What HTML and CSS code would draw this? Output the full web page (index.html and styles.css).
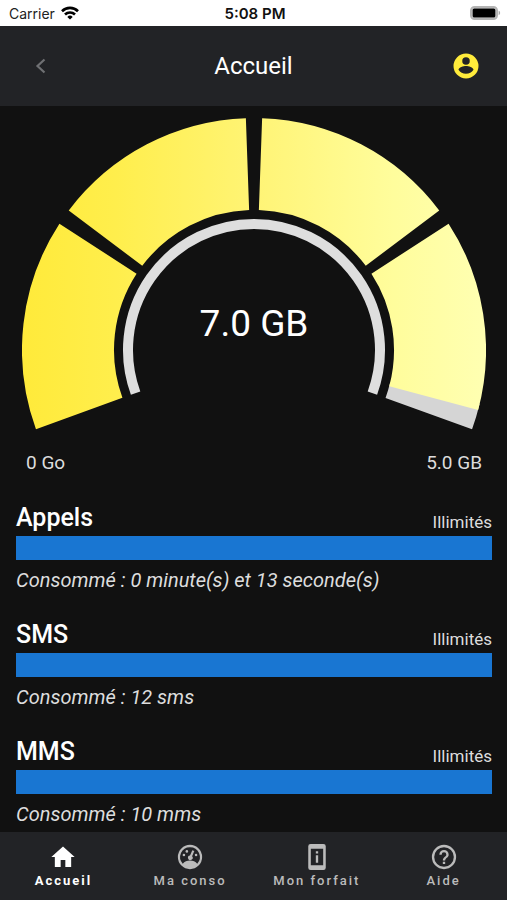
FILE: index.html
```html
<!DOCTYPE html>
<html lang="fr">
<head>
<meta charset="utf-8">
<meta name="viewport" content="width=device-width, initial-scale=1">
<title>Accueil</title>
<link rel="stylesheet" href="styles.css">
</head>
<body>
<div class="status">
  <div class="carrier">
    <span>Carrier</span>
    <svg width="18" height="14" viewBox="0 0 18 14" fill="none" stroke="#000" stroke-width="2.6" aria-hidden="true">
      <path d="M1 5.200a11.400 11.400 0 0 1 16 0"/>
      <path d="M4 8.500a7.100 7.100 0 0 1 10 0"/>
      <path d="M9 13.600 6.300 10.900a3.900 3.900 0 0 1 5.400 0z" fill="#000" stroke="none"/>
    </svg>
  </div>
  <time class="clock">5:08 PM</time>
  <svg class="battery" width="31" height="14" viewBox="0 0 31 14" aria-hidden="true">
    <rect x="1" y="1" width="26" height="12" rx="3.600" fill="#ddd" stroke="#b4b4b4" stroke-width="2"/>
    <rect x="2.600" y="2.400" width="22.800" height="9.200" rx="1.600" fill="#000"/>
    <path d="M28.600 4.800c2 .6 2 3.800 0 4.400z" fill="#a9a9a9"/>
  </svg>
</div>

<header class="topbar">
  <button class="icon-button back" type="button" aria-label="Retour">
    <svg width="24" height="24" viewBox="0 0 24 24" fill="none" stroke="#6f7073" stroke-width="2.200" aria-hidden="true"><path d="m15.500 5.500-7 6.500 7 6.500"/></svg>
  </button>
  <h1>Accueil</h1>
  <button class="icon-button" type="button" aria-label="Mon compte">
    <svg width="30" height="30" viewBox="0 0 24 24" fill="#ffeb3b" aria-hidden="true"><path d="M12 2a10 10 0 1 0 0 20 10 10 0 0 0 0-20zm0 3a3 3 0 1 1 0 6 3 3 0 0 1 0-6zm0 13.200c-2.500 0-4.710-1.280-6-3.220.03-1.990 4-3.080 6-3.080s5.970 1.090 6 3.080A7.200 7.200 0 0 1 12 18.200z"/></svg>
  </button>
</header>

<main>
  <section class="gauge" aria-label="Données mobiles">
    <svg class="dial" viewBox="-232 -232 464 312" fill="none" role="img" aria-label="7.0 GB">
      <defs>
        <linearGradient id="volume" gradientUnits="userSpaceOnUse" x1="-232" y1="0" x2="232" y2="0">
          <stop offset="0" stop-color="#ffea3a"/>
          <stop offset=".2" stop-color="#ffee4c"/>
          <stop offset=".5" stop-color="#fff475"/>
          <stop offset=".8" stop-color="#fffd9c"/>
          <stop offset="1" stop-color="#ffffb2"/>
        </linearGradient>
      </defs>
      <path stroke="#d5d5d5" stroke-width="92" d="M180.900 43.200A186 186 0 0 1 174.800 63.600"/>
      <g stroke="url(#volume)" stroke-width="92">
        <path d="M-174.800 63.600A186 186 0 0 1-156-101.300"/>
        <path d="M-148.500-111.900A186 186 0 0 1-6.500-185.900"/>
        <path d="M6.500-185.900A186 186 0 0 1 148.500-111.900"/>
        <path d="M156-101.300A186 186 0 0 1 179.700 48.100"/>
      </g>
      <path stroke="#dedede" stroke-width="10" d="M-118.400 43.100A126 126 0 1 1 118.400 43.100"/>
      <text class="value" x="0" y="-14" text-anchor="middle">7.0 GB</text>
    </svg>
    <div class="limits"><span>0 Go</span><span>5.0 GB</span></div>
  </section>

  <section class="usage">
    <div class="usage-head"><h2>Appels</h2><span>Illimités</span></div>
    <div class="bar"></div>
    <p>Consommé : 0 minute(s) et 13 seconde(s)</p>
  </section>
  <section class="usage">
    <div class="usage-head"><h2>SMS</h2><span>Illimités</span></div>
    <div class="bar"></div>
    <p>Consommé : 12 sms</p>
  </section>
  <section class="usage">
    <div class="usage-head"><h2>MMS</h2><span>Illimités</span></div>
    <div class="bar"></div>
    <p>Consommé : 10 mms</p>
  </section>
</main>

<nav class="tabs">
  <a class="active" href="#accueil">
    <svg width="28" height="28" viewBox="0 0 24 24" fill="currentColor" aria-hidden="true"><path d="M10 20.500v-6h4v6h5v-8.500h3L12 3 2 12h3v8.500z"/></svg>
    <span>Accueil</span>
  </a>
  <a href="#conso">
    <svg width="28" height="28" viewBox="0 0 24 24" fill="currentColor" aria-hidden="true">
      <path fill-rule="evenodd" d="M12 1.600a10.400 10.400 0 1 0 0 20.800 10.400 10.400 0 0 0 0-20.800zm0 2a8.400 8.400 0 0 1 6.200 14.100c-1.500-1.700-3.700-2.700-6.200-2.700s-4.700 1-6.200 2.700A8.400 8.400 0 0 1 12 3.600z"/>
      <circle cx="9.300" cy="7.200" r="1.100"/><circle cx="6.800" cy="10.300" r="1.100"/><circle cx="17.200" cy="10.300" r="1.100"/>
      <path d="m14 6.200 1.700.7-1.900 4.500a2 2 0 1 1-1.800-.7z"/>
    </svg>
    <span>Ma conso</span>
  </a>
  <a href="#forfait">
    <svg width="28" height="28" viewBox="0 0 24 24" fill="currentColor" aria-hidden="true"><path fill-rule="evenodd" d="M6.500.8h11a2 2 0 0 1 2 2v18.400a2 2 0 0 1-2 2h-11a2 2 0 0 1-2-2V2.800a2 2 0 0 1 2-2zM6.700 5v14h10.600V5z"/><path d="M11 7h2v2h-2zm0 3.500h2V17h-2z"/></svg>
    <span>Mon forfait</span>
  </a>
  <a href="#aide">
    <svg width="28" height="28" viewBox="0 0 24 24" fill="currentColor" aria-hidden="true"><path fill-rule="evenodd" d="M12 1.600a10.400 10.400 0 1 0 0 20.800 10.400 10.400 0 0 0 0-20.800zm0 2a8.400 8.400 0 1 1 0 16.800 8.400 8.400 0 0 1 0-16.800z"/><path d="M11 16h2v2h-2zM12 6a4 4 0 0 0-4 4h2a2 2 0 1 1 4 0c0 2-3 1.750-3 5h2c0-2.250 3-2.500 3-5a4 4 0 0 0-4-4z"/></svg>
    <span>Aide</span>
  </a>
</nav>
</body>
</html>
```
FILE: styles.css
```css
* {
  box-sizing: border-box;
}

body {
  margin: 0;
  height: 100vh;
  display: flex;
  flex-direction: column;
  background: #111;
  color: #fff;
  font-family: Roboto, "Liberation Sans", sans-serif;
}

h1,
h2,
p {
  margin: 0;
}

.status {
  display: grid;
  grid-template-columns: 1fr auto 1fr;
  align-items: center;
  flex: none;
  height: 26px;
  padding: 0 6px 0 9px;
  background: #fff;
  color: #222;
  font-family: Inter, sans-serif;
  font-size: 14px;
}

.carrier {
  display: flex;
  align-items: center;
  gap: 6px;
}

.clock {
  color: #111;
  font-size: 15px;
  font-weight: 600;
}

.battery {
  justify-self: end;
}

.topbar {
  display: flex;
  align-items: center;
  justify-content: space-between;
  flex: none;
  height: 80px;
  padding: 0 20px;
  background: #222326;
}

.topbar h1 {
  font-size: 24px;
  font-weight: 400;
}

.icon-button {
  display: grid;
  place-items: center;
  width: 42px;
  height: 42px;
  padding: 0;
  border: 0;
  background: none;
}

main {
  flex: 1;
  min-height: 0;
  overflow: hidden;
  padding: 12px 15px 0 16px;
}

.gauge {
  padding: 0 6px;
}

.dial {
  display: block;
  width: 100%;
}

.value {
  fill: #fff;
  font-size: 37px;
}

.limits {
  display: flex;
  justify-content: space-between;
  padding: 21px 4px 0;
  color: #ddd;
  font-size: 19px;
  line-height: 24px;
}

.usage {
  padding-top: 27px;
}

.usage-head {
  display: flex;
  align-items: flex-end;
  justify-content: space-between;
  height: 34px;
  padding-bottom: 4px;
}

.usage-head h2 {
  font-size: 25px;
  font-weight: 500;
  line-height: 28px;
}

.usage-head span {
  color: #ddd;
  font-size: 17px;
  line-height: 20px;
}

.bar {
  height: 24px;
  background: #1976d2;
}

.usage p {
  padding-top: 8px;
  color: #ddd;
  font-size: 20px;
  font-style: italic;
  line-height: 24px;
}

.tabs {
  display: flex;
  flex: none;
  height: 68px;
  background: #222326;
}

.tabs a {
  display: flex;
  flex: 1;
  flex-direction: column;
  align-items: center;
  padding-top: 11px;
  color: #bbb;
  font-size: 13px;
  font-weight: 500;
  letter-spacing: 2px;
  line-height: 20px;
  text-decoration: none;
}

.tabs .active {
  color: #fff;
  font-weight: 700;
}
```
